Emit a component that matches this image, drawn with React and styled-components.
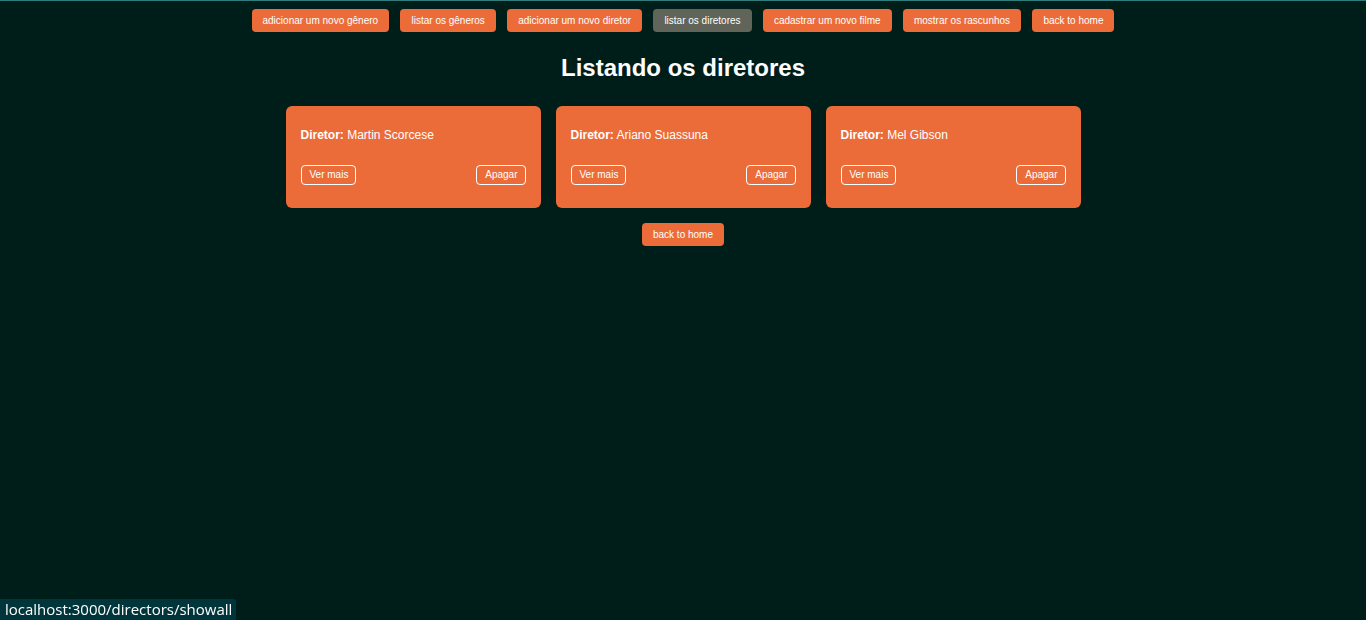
import React from "react";
import styled, { createGlobalStyle } from "styled-components";

const GlobalStyle = createGlobalStyle`
  * { box-sizing: border-box; }
  body {
    margin: 0;
    background: #001e19;
    color: #fff;
    font-family: "Liberation Sans", Arial, sans-serif;
  }
`;

const Page = styled.div`
  min-height: 100vh;
  border-top: 1px solid #2f7d7d;
  padding-top: 8px;
  display: flex;
  flex-direction: column;
  align-items: center;
`;

const Nav = styled.nav`
  text-align: center;
  font-size: 12px;
  line-height: 23px;
`;

const NavButton = styled.button`
  margin: 0 4px;
  padding: 6px 11px;
  vertical-align: top;
  border: 0;
  border-radius: 4px;
  background: ${({ $active }) => ($active ? "#606459" : "#eb6c38")};
  color: #fff;
  font: 10px/11px "Liberation Sans", Arial, sans-serif;
  white-space: nowrap;
  cursor: pointer;
`;

const Title = styled.h1`
  margin: 22px 0 24px;
  font-size: 24px;
  line-height: 28px;
`;

const CardList = styled.main`
  display: flex;
  flex-wrap: wrap;
  justify-content: center;
  gap: 15px;
  margin-bottom: 15px;
`;

const Card = styled.article`
  width: 255px;
  padding: 22px 15px 23px;
  border-radius: 6px;
  background: #eb6c38;
`;

const Director = styled.p`
  margin: 0 0 23px;
  font-size: 12px;
  line-height: 14px;
`;

const Actions = styled.div`
  display: flex;
  justify-content: space-between;
`;

const OutlineButton = styled.button`
  padding: 3px 7px 4px 8px;
  border: 1px solid #fff;
  border-radius: 4px;
  background: transparent;
  color: #fff;
  font: 10px/11px "Liberation Sans", Arial, sans-serif;
  cursor: pointer;
`;

const LinkStatus = styled.div`
  position: fixed;
  left: 0;
  bottom: 0;
  padding: 0 4px 0 5px;
  border-top-right-radius: 3px;
  background: #00363b;
  font: 15px/21px "Open Sans", sans-serif;
`;

const links = [
  "adicionar um novo gênero",
  "listar os gêneros",
  "adicionar um novo diretor",
  "listar os diretores",
  "cadastrar um novo filme",
  "mostrar os rascunhos",
  "back to home",
];

const directors = ["Martin Scorcese", "Ariano Suassuna", "Mel Gibson"];

export default function App() {
  return (
    <>
      <GlobalStyle />
      <Page>
        <Nav>
          {links.map((label) => (
            <React.Fragment key={label}>
              <NavButton type="button" $active={label === "listar os diretores"}>
                {label}
              </NavButton>{" "}
            </React.Fragment>
          ))}
        </Nav>
        <Title>Listando os diretores</Title>
        <CardList>
          {directors.map((name) => (
            <Card key={name}>
              <Director>
                <strong>Diretor:</strong> {name}
              </Director>
              <Actions>
                <OutlineButton type="button">Ver mais</OutlineButton>
                <OutlineButton type="button">Apagar</OutlineButton>
              </Actions>
            </Card>
          ))}
        </CardList>
        <NavButton type="button">back to home</NavButton>
      </Page>
      <LinkStatus>localhost:3000/directors/showall</LinkStatus>
    </>
  );
}
